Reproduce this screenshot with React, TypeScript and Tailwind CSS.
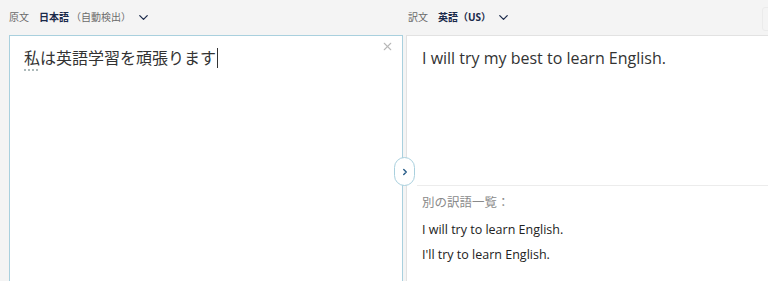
import { ChevronDown, ChevronRight, X } from "lucide-react";

const JP = '"Open Sans", "Noto Sans CJK JP", sans-serif';

function LangLabel({ label, lang, note }: { label: string; lang: string; note?: string }) {
  return (
    <div className="flex items-center h-[35px] text-[10px]" style={{ fontFamily: JP }}>
      <span className="text-[#6b6b6b] mr-[10px]">{label}</span>
      <span className="font-bold text-[#1b2a4a]">{lang}</span>
      {note && <span className="text-[#6b6b6b] ml-[2px]">{note}</span>}
      <ChevronDown className="ml-[5px] text-[#1b2a4a]" size={15} strokeWidth={2} />
    </div>
  );
}

export default function App() {
  return (
    <div className="w-[768px] h-[281px] overflow-hidden bg-[#f4f4f4] flex flex-col" style={{ fontFamily: JP }}>
      {/* Header */}
      <div className="flex h-[35px] shrink-0">
        <div className="w-[407px] pl-[9px]">
          <LangLabel label="原文" lang="日本語" note="（自動検出）" />
        </div>
        <div className="flex-1 pl-[1px] relative">
          <LangLabel label="訳文" lang="英語（US）" />
          <div className="absolute right-[-10px] top-[7px] w-[16px] h-[24px] rounded-[3px] border border-[#ebebeb] bg-[#f4f4f4]" />
        </div>
      </div>

      {/* Panels */}
      <div className="flex flex-1 min-h-0">
        <div className="ml-[9px] w-[394px] bg-white border-l border-t border-r border-[#a9d0de] relative">
          <div className="flex items-start pl-[14px] pt-[10px]">
            <span className="text-[16px] leading-[24px] text-[#333]">
              <span className="underline decoration-dotted decoration-[#9aa] underline-offset-[6px]">私</span>
              は英語学習を頑張ります
            </span>
            <span className="w-px h-[20px] bg-[#333] mt-[2px] ml-[1px]" />
          </div>
          <X className="absolute right-[8px] top-[4px] text-[#b8b8b8]" size={13} strokeWidth={2} />
          <button className="absolute right-[-13px] top-[121px] w-[21px] h-[29px] rounded-full bg-white border border-[#a9d0de] flex items-center justify-center z-10">
            <ChevronRight className="text-[#2b5f8a]" size={10} strokeWidth={3.5} />
          </button>
        </div>
        <div className="ml-[3px] flex-1 bg-white border-l border-t border-[#e2e2e2] flex flex-col">
          <div className="h-[150px] border-b border-[#ececec] ml-[10px] -mr-px">
            <p className="pt-[9px] pl-[5px] text-[16px] leading-[26px] text-[#333]">
              I will try my best to learn English.
            </p>
          </div>
          <div className="pl-[15px] pt-[7px]">
            <p className="text-[12.5px] leading-[20px] text-[#8a8a8a]">別の訳語一覧：</p>
            <p className="mt-[8px] text-[12.5px] leading-[18px] text-[#222]">I will try to learn English.</p>
            <p className="mt-[7px] text-[12.5px] leading-[18px] text-[#222]">I'll try to learn English.</p>
          </div>
        </div>
      </div>
    </div>
  );
}
